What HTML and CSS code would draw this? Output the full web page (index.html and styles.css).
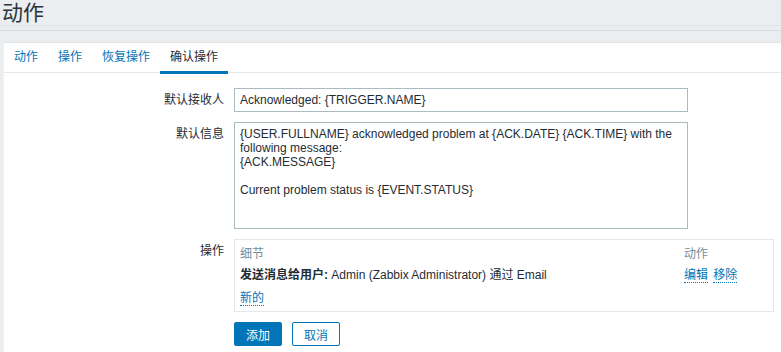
FILE: index.html
```html
<!DOCTYPE html>
<html lang="zh">
<head>
    <meta charset="UTF-8">
    <title>动作</title>
    <link rel="stylesheet" href="styles.css">
</head>
<body>
    <div class="header">
        <h1>动作</h1>
    </div>
    <div class="header-band"></div>

    <div class="panel">
        <ul class="tabs">
            <li><a href="#">动作</a></li>
            <li><a href="#">操作</a></li>
            <li><a href="#">恢复操作</a></li>
            <li class="active"><a href="#">确认操作</a></li>
        </ul>

        <form class="form">
            <label class="form-label" for="asunto">默认接收人</label>
            <div class="form-field">
                <input type="text" id="asunto" class="input" value="Acknowledged: {TRIGGER.NAME}">
            </div>

            <label class="form-label" for="mensaje">默认信息</label>
            <div class="form-field">
                <textarea id="mensaje" class="textarea">{USER.FULLNAME} acknowledged problem at {ACK.DATE} {ACK.TIME} with the following message:
{ACK.MESSAGE}

Current problem status is {EVENT.STATUS}</textarea>
            </div>

            <div class="form-label">操作</div>
            <div class="form-field">
                <div class="ops-box">
                    <table class="ops">
                        <tr>
                            <th>细节</th>
                            <th class="col-actions">动作</th>
                        </tr>
                        <tr>
                            <td><b>发送消息给用户:</b> Admin (Zabbix Administrator) 通过 Email</td>
                            <td class="col-actions"><a class="link" href="#">编辑</a> <a class="link link-next" href="#">移除</a></td>
                        </tr>
                        <tr>
                            <td colspan="2"><a class="link" href="#">新的</a></td>
                        </tr>
                    </table>
                </div>
            </div>

            <div></div>
            <div class="form-field buttons">
                <button type="submit" class="btn">添加</button>
                <button type="button" class="btn btn-alt">取消</button>
            </div>
        </form>
    </div>
</body>
</html>
```

FILE: styles.css
```css
:root {
    --bg: #ebeef0;
    --text: #1f2c33;
    --link: #0275b8;
    --muted: #768d99;
    --border: #dfe4e7;
    --input-border: #acbbc2;
}
body {
    margin: 0;
    background-color: var(--bg);
    color: var(--text);
    font-family: Arial, "Liberation Sans", "Noto Sans CJK SC", sans-serif;
    font-size: 12px;
    line-height: 14px;
    height: 352px;
    overflow: hidden;
}
.header {
    height: 25px;
    border-bottom: 1px solid #e1e5e8;
}
.header h1 {
    margin: 0;
    padding-left: 2px;
    font-size: 21px;
    font-weight: normal;
    line-height: 26px;
    color: #2a3338;
}
.header-band {
    height: 4px;
    border-bottom: 1px solid #d7dce0;
    margin-bottom: 11px;
}
.panel {
    margin-left: 3px;
    background-color: #fff;
    border-top: 1px solid #dfe3e6;
    border-left: 1px solid #f0f2f3;
    min-height: 320px;
}
.tabs {
    list-style: none;
    margin: 0;
    padding: 0;
    display: flex;
    height: 29px;
    border-bottom: 1px solid #e6e9eb;
}
.tabs li {
    padding: 0 10px;
    line-height: 29px;
    position: relative;
}
.tabs a {
    color: var(--link);
    text-decoration: none;
}
.tabs .active a {
    color: var(--text);
}
.tabs .active::after {
    content: "";
    position: absolute;
    left: 0;
    right: 0;
    bottom: -2px;
    height: 3px;
    background-color: var(--link);
}
.form {
    display: grid;
    grid-template-columns: 220px 540px;
    column-gap: 10px;
    row-gap: 10px;
    padding-top: 15px;
}
.form-label {
    text-align: right;
    padding-top: 5px;
}
.input, .textarea {
    box-sizing: border-box;
    width: 454px;
    border: 1px solid var(--input-border);
    font-family: inherit;
    font-size: 12px;
    color: var(--text);
    margin: 0;
    display: block;
}
.input {
    height: 24px;
    padding: 0 5px;
}
.textarea {
    height: 107px;
    padding: 4px 5px;
    line-height: 14px;
    resize: none;
}
.ops-box {
    box-sizing: border-box;
    width: 540px;
    border: 1px solid #e6e9eb;
    padding: 4px 0 1px;
}
.ops {
    width: 100%;
    border-collapse: collapse;
    table-layout: fixed;
}
.ops th, .ops td {
    text-align: left;
    padding: 4px 5px;
    font-weight: normal;
    white-space: nowrap;
}
.ops th {
    color: var(--muted);
    padding-top: 3px;
    padding-bottom: 3px;
}
.ops td {
    padding-top: 4px;
    padding-bottom: 5px;
}
.ops .col-actions {
    width: 84px;
}
.link {
    color: var(--link);
    text-decoration: none;
    border-bottom: 1px dotted var(--link);
}
.link-next {
    margin-left: 2px;
}
.buttons {
    display: flex;
    gap: 10px;
}
.btn {
    height: 24px;
    padding: 0 11px;
    border: 1px solid var(--link);
    border-radius: 2px;
    background-color: var(--link);
    color: #fff;
    font-family: inherit;
    font-size: 12px;
    cursor: pointer;
}
.btn-alt {
    background-color: #fff;
    color: var(--link);
}
```
